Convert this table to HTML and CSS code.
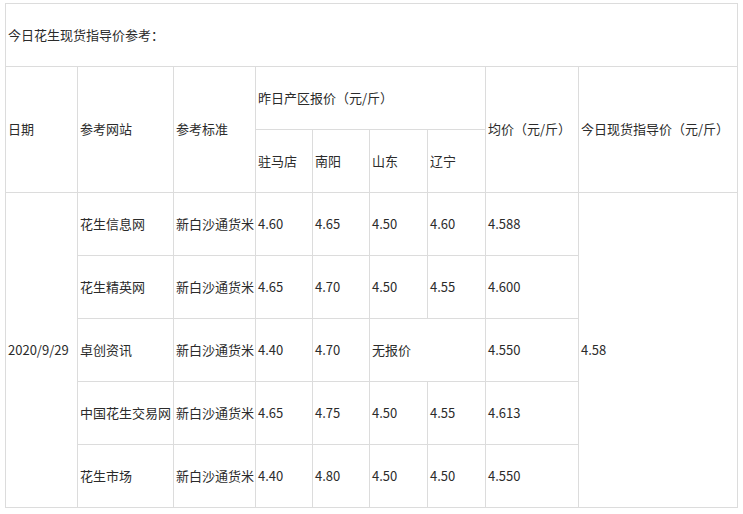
FILE: index.html
```html
<!DOCTYPE html>
<html lang="zh">
<head>
<meta charset="utf-8">
<link rel="stylesheet" href="styles.css">
</head>
<body>
<table class="price-table">
  <colgroup>
    <col class="c-date"><col class="c-site"><col class="c-std">
    <col class="c-region"><col class="c-region"><col class="c-region2"><col class="c-region2">
    <col class="c-avg"><col class="c-guide">
  </colgroup>
  <tbody>
    <tr><td colspan="9">今日花生现货指导价参考：</td></tr>
    <tr>
      <td rowspan="2">日期</td>
      <td rowspan="2">参考网站</td>
      <td rowspan="2">参考标准</td>
      <td colspan="4">昨日产区报价（元/斤）</td>
      <td rowspan="2">均价（元/斤）</td>
      <td rowspan="2">今日现货指导价（元/斤）</td>
    </tr>
    <tr><td>驻马店</td><td>南阳</td><td>山东</td><td>辽宁</td></tr>
    <tr>
      <td rowspan="5">2020/9/29</td>
      <td>花生信息网</td><td>新白沙通货米</td>
      <td>4.60</td><td>4.65</td><td>4.50</td><td>4.60</td><td>4.588</td>
      <td rowspan="5">4.58</td>
    </tr>
    <tr><td>花生精英网</td><td>新白沙通货米</td><td>4.65</td><td>4.70</td><td>4.50</td><td>4.55</td><td>4.600</td></tr>
    <tr><td>卓创资讯</td><td>新白沙通货米</td><td>4.40</td><td>4.70</td><td colspan="2">无报价</td><td>4.550</td></tr>
    <tr><td>中国花生交易网</td><td>新白沙通货米</td><td>4.65</td><td>4.75</td><td>4.50</td><td>4.55</td><td>4.613</td></tr>
    <tr><td>花生市场</td><td>新白沙通货米</td><td>4.40</td><td>4.80</td><td>4.50</td><td>4.50</td><td>4.550</td></tr>
  </tbody>
</table>
</body>
</html>
```
FILE: styles.css
```css
html, body {
  margin: 0;
  padding: 0;
  background: #fff;
}
body {
  font-family: "Noto Sans CJK SC", "Noto Sans", sans-serif;
  font-size: 13px;
  color: #2b2b2b;
}
.price-table {
  margin: 3px 0 0 5px;
  width: 733px;
  table-layout: fixed;
  border-collapse: collapse;
}
.price-table tr {
  height: 63px;
}
.price-table td {
  border: 1px solid #dcdcdc;
  padding: 0 2px 2px;
  text-align: left;
  vertical-align: middle;
  white-space: nowrap;
  overflow: hidden;
}
.c-date { width: 72px; }
.c-site { width: 96px; }
.c-std { width: 82px; }
.c-region { width: 57px; }
.c-region2 { width: 58px; }
.c-avg { width: 93px; }
.c-guide { width: 159px; }
```
